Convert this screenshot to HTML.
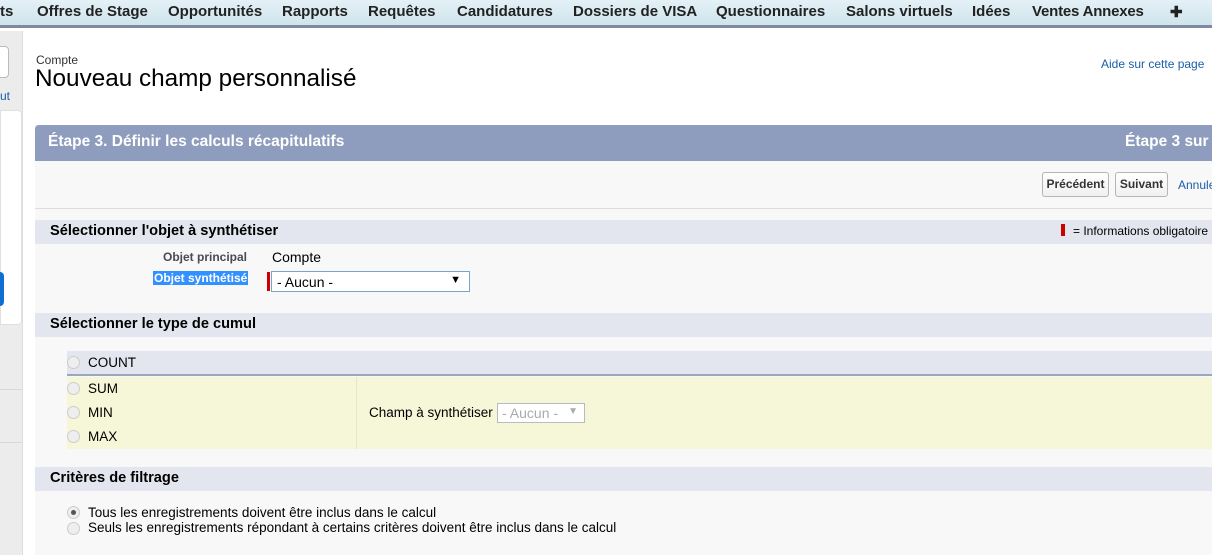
<!DOCTYPE html>
<html><head><meta charset="utf-8"><style>
*{box-sizing:border-box;margin:0;padding:0}
body{width:1212px;height:555px;overflow:hidden;font-family:"Liberation Sans",Arial,sans-serif;background:#fff;position:relative;font-size:13px;color:#000}
.nav{position:absolute;left:0;top:0;width:1212px;height:28px;background:linear-gradient(#e4f1f6,#cfe4ec);border-bottom:3px solid #7d8a9f;white-space:nowrap}
.nav span{position:absolute;top:3px;font-size:15px;font-weight:bold;color:#222}
.side{position:absolute;left:0;top:31px;width:23px;height:524px;background:#ececec;border-right:1px solid #ddd}
.abs{position:absolute}
.sec{position:absolute;left:35px;width:1177px;height:24px;background:#e3e6ee}
.sec b{position:absolute;left:15px;top:3px;font-size:14.6px;color:#000}
.radio{position:absolute;width:13px;height:13px;border-radius:50%;border:1px solid #ccc;background:#eee}
</style></head><body>
<div class="nav">
<span style="left:0">ts</span><span style="left:37px">Offres de Stage</span><span style="left:168px">Opportunités</span><span style="left:282px">Rapports</span><span style="left:368px">Requêtes</span><span style="left:457px">Candidatures</span><span style="left:573px">Dossiers de VISA</span><span style="left:716px">Questionnaires</span><span style="left:846px">Salons virtuels</span><span style="left:972px">Idées</span><span style="left:1032px;letter-spacing:-0.2px">Ventes Annexes</span><span style="left:1170px">✚</span>
</div>
<div class="side">
<div class="abs" style="left:-6px;top:15px;width:15px;height:32px;border:1px solid #bbb;border-radius:4px;background:#fff"></div>
<div class="abs" style="left:0;top:58px;font-size:12px;color:#1a5fa8">ut</div>
<div class="abs" style="left:0;top:79px;width:22px;height:215px;background:#fff;border-radius:0 4px 4px 0;border:1px solid #e0e0e0"></div>
<div class="abs" style="left:0;top:241px;width:4px;height:34px;background:#0f6fd1;border-radius:0 4px 4px 0"></div>
<div class="abs" style="left:0;top:358px;width:22px;height:1px;background:#d8d8d8"></div>
<div class="abs" style="left:0;top:411px;width:22px;height:1px;background:#d8d8d8"></div>
</div>
<div class="abs" style="left:36px;top:53px;font-size:12px;color:#333">Compte</div>
<div class="abs" style="left:35px;top:65px;font-size:24.3px;color:#000">Nouveau champ personnalisé</div>
<div class="abs" style="left:1101px;top:57px;font-size:12px;color:#1a5fa8">Aide sur cette page</div>
<div class="abs" style="left:35px;top:125px;width:1177px;height:430px;background:#f8f8f8"></div>
<div class="abs" style="left:35px;top:125px;width:1177px;height:36px;background:#8e9dbe;border-radius:4px 0 0 0"></div>
<div class="abs" style="left:48px;top:133px;font-size:15.5px;font-weight:bold;color:#fff">Étape 3. Définir les calculs récapitulatifs</div>
<div class="abs" style="left:1125px;top:133px;font-size:15.5px;font-weight:bold;color:#fff">Étape 3 sur</div>
<div class="abs" style="left:1042px;top:172px;width:67px;height:25px;border:1px solid #b5b5b5;border-radius:3px;background:linear-gradient(#fff,#f0f0f0);font-size:12px;font-weight:bold;color:#333;text-align:center;line-height:23px">Précédent</div>
<div class="abs" style="left:1115px;top:172px;width:53px;height:25px;border:1px solid #b5b5b5;border-radius:3px;background:linear-gradient(#fff,#f0f0f0);font-size:12px;font-weight:bold;color:#333;text-align:center;line-height:23px">Suivant</div>
<div class="abs" style="left:1178px;top:178px;font-size:12px;color:#1a5fa8">Annule</div>
<div class="abs" style="left:35px;top:208px;width:1177px;height:1px;background:#dcdcdc"></div>
<div class="sec" style="top:220px"><b>Sélectionner l'objet à synthétiser</b></div>
<div class="abs" style="left:1061px;top:224px;width:4px;height:12px;background:#c00"></div>
<div class="abs" style="left:1073px;top:224px;font-size:12px">= Informations obligatoire</div>
<div class="abs" style="left:163px;top:250px;font-size:12px;font-weight:bold;color:#4a4a56">Objet principal</div>
<div class="abs" style="left:272px;top:249px;font-size:14px">Compte</div>
<div class="abs" style="left:153px;top:271px;font-size:12px;font-weight:bold;color:#fff;background:#3390ff;padding:0 1px">Objet synthétisé</div>
<div class="abs" style="left:267px;top:272px;width:3px;height:19px;background:#c00"></div>
<div class="abs" style="left:271px;top:271px;width:199px;height:21px;border:1px solid #7da2ce;background:#fff;font-size:14px;padding:2px 5px">- Aucun -<span style="position:absolute;right:8px;top:2px;font-size:11px">▼</span></div>
<div class="sec" style="top:313px"><b>Sélectionner le type de cumul</b></div>
<div class="abs" style="left:67px;top:351px;width:1145px;height:25px;background:#e3e6ee;border-bottom:2px solid #9aa7c3"></div>
<div class="radio" style="left:67px;top:356px"></div><div class="abs" style="left:88px;top:355px;font-size:13.5px">COUNT</div>
<div class="abs" style="left:67px;top:377px;width:1145px;height:72px;background:#f6f6d8"></div>
<div class="abs" style="left:356px;top:377px;width:1px;height:72px;background:#e6e6c8"></div>
<div class="radio" style="left:67px;top:382px"></div><div class="abs" style="left:88px;top:381px;font-size:13.5px">SUM</div>
<div class="radio" style="left:67px;top:406px"></div><div class="abs" style="left:88px;top:405px;font-size:13.5px">MIN</div>
<div class="radio" style="left:67px;top:430px"></div><div class="abs" style="left:88px;top:429px;font-size:13.5px">MAX</div>
<div class="abs" style="left:369px;top:405px;font-size:13.5px">Champ à synthétiser</div>
<div class="abs" style="left:497px;top:403px;width:88px;height:20px;border:1px solid #bbb;background:#fff;font-size:14px;color:#aaa;padding:1px 4px">- Aucun -<span style="position:absolute;right:6px;top:2px;font-size:10px">▼</span></div>
<div class="sec" style="top:467px"><b>Critères de filtrage</b></div>
<div class="radio" style="left:67px;top:506px;background:#eee"><div style="position:absolute;left:3px;top:3px;width:5px;height:5px;border-radius:50%;background:#555"></div></div>
<div class="abs" style="left:88px;top:505px;font-size:13.5px">Tous les enregistrements doivent être inclus dans le calcul</div>
<div class="radio" style="left:67px;top:522px"></div>
<div class="abs" style="left:88px;top:520px;font-size:13.5px">Seuls les enregistrements répondant à certains critères doivent être inclus dans le calcul</div>
</body></html>
